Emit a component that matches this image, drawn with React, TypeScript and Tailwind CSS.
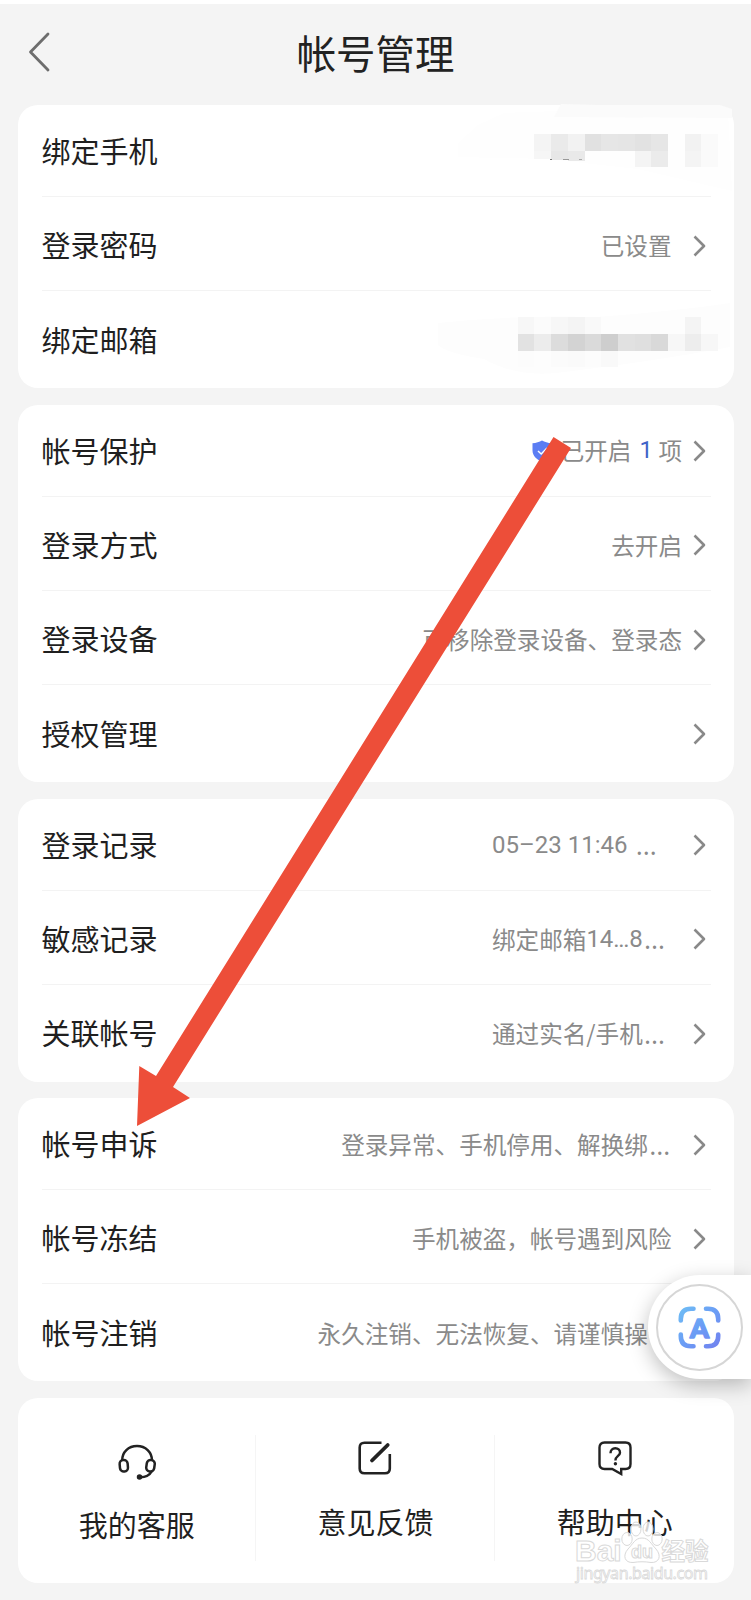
import React from 'react';
import clsx from 'clsx';

type RowData = {
  label: string;
  value?: React.ReactNode;
  // distance between the value and the chevron
  gap?: string;
  valueClass?: string;
  hideChevron?: boolean;
};

function Dots() {
  return (
    <span className="w-[23.6px] text-center font-['Open_Sans'] text-[27px] leading-[24px]">…</span>
  );
}

function Chevron() {
  return (
    <svg width="13" height="22" viewBox="0 0 13 22" fill="none" className="shrink-0">
      <path d="M1.5 1.5L11 11L1.5 20.5" stroke="#898989" strokeWidth="2.6" strokeLinejoin="round" />
    </svg>
  );
}

function Shield() {
  return (
    <svg width="20" height="22" viewBox="0 0 20 22" fill="none">
      <path
        d="M10 0.5C12.5 2 16 3 19.5 3.2V10.5C19.5 16 15 20 10 21.5C5 20 0.5 16 0.5 10.5V3.2C4 3 7.5 2 10 0.5Z"
        fill="#5b7df3"
      />
      <path d="M6 11L9.2 14L15 8" stroke="#fff" strokeWidth="1.5" />
    </svg>
  );
}

const PHONE_CELLS = [
  ['bg-[#f4f4f4]', 'bg-[#eaeaea]', 'bg-[#f2f2f2]', 'bg-[#e1e1e1]', 'bg-[#e6e6e6]', 'bg-[#e5e5e5]', 'bg-[#e2e2e2]', 'bg-[#e6e6e6]', '', 'bg-[#f2f2f2]', 'bg-[#fafafa]'],
  ['bg-[#f6f6f6] h-[8px]', 'bg-[#e7e7e7] h-[9px]', 'bg-[#e9e9e9] h-[10px]', '', '', '', 'bg-[#f4f4f4]', 'bg-[#ebebeb]', '', 'bg-[#f4f4f4]', 'bg-[#fafafa]'],
];

const MAIL_CELLS = [
  ['bg-[#f7f7f7]', 'bg-[#fbfbfb]', 'bg-[#f7f7f7]', 'bg-[#f4f4f4]', 'bg-[#f9f9f9]', '', '', '', '', '', 'bg-[#f4f4f4]', ''],
  ['bg-[#e2e2e2]', 'bg-[#ececec]', 'bg-[#dcdcdc]', 'bg-[#d3d3d3]', 'bg-[#dadada]', 'bg-[#cecece]', 'bg-[#e1e1e1]', 'bg-[#dfdfdf]', 'bg-[#d9d9d9]', 'bg-[#f7f7f7]', 'bg-[#ededed]', 'bg-[#f7f7f7]'],
  ['bg-[#fcfcfc]', '', 'bg-[#fbfbfb]', 'bg-[#fafafa]', 'bg-[#fcfcfc]', 'bg-[#f9f9f9]', '', '', '', '', '', ''],
];

function Mosaic({ cells }: { cells: string[][] }) {
  return (
    <div className="relative">
      {cells.map((line, y) => (
        <div key={y} className="flex h-[16.7px]">
          {line.map((cell, x) => (
            <div key={x} className={clsx('w-[16.7px]', !cell.includes(' h-') && 'h-full', cell)} />
          ))}
        </div>
      ))}
    </div>
  );
}

function PhoneMask() {
  return (
    <div className="relative -mr-[7px] -mt-[2px]">
      <svg
        className="absolute -left-[76px] -top-[31px]"
        width="276"
        height="90"
        viewBox="0 0 276 90"
        fill="none"
      >
        <path d="M0 40L20 22L46 10L100 8H270L274 88L180 66L90 56L0 54Z" fill="#fefefe" />
        <path d="M96 14L103 1L140 2H262L274 6V15Z" fill="#fbfbfb" />
      </svg>
      <Mosaic cells={PHONE_CELLS} />
      <div className="absolute left-[16px] top-[25px] flex w-[32px] justify-between">
        <i className="h-[1.5px] w-[2px] bg-[#777]" />
        <i className="h-px w-[6px] bg-[#999]" />
        <i className="h-px w-[3px] bg-[#aaa]" />
      </div>
    </div>
  );
}

function MailMask() {
  return (
    <div className="relative -mr-[7px] mt-[4px]">
      <svg
        className="absolute -left-[82px] -top-[14px]"
        width="298"
        height="75"
        viewBox="0 0 298 75"
        fill="none"
      >
        <path d="M2 20Q80 12 160 14Q240 8 294 0V44Q220 58 120 70Q80 74 48 56Q10 50 2 42Z" fill="#fdfdfd" />
      </svg>
      <Mosaic cells={MAIL_CELLS} />
    </div>
  );
}

const GROUPS: RowData[][] = [
  [
    { label: '绑定手机', value: <PhoneMask />, hideChevron: true },
    { label: '登录密码', value: '已设置', gap: 'gap-[21.5px]' },
    { label: '绑定邮箱', value: <MailMask />, hideChevron: true },
  ],
  [
    {
      label: '帐号保护',
      value: (
        <>
          <Shield />
          <span className="ml-[9px]">已开启</span>
          <span className="mx-[8px] w-[11px] text-center font-['Roboto'] text-[#3f63c8]">1</span>
          <span>项</span>
        </>
      ),
      gap: 'gap-[11px]',
    },
    { label: '登录方式', value: '去开启', gap: 'gap-[11px]' },
    { label: '登录设备', value: '可移除登录设备、登录态', gap: 'gap-[11px]' },
    { label: '授权管理' },
  ],
  [
    {
      label: '登录记录',
      value: (
        <>
          <span className="mr-[7px] font-['Roboto'] text-[24px]">05–23 11:46</span>
          <Dots />
        </>
      ),
      valueClass: 'w-[201px]',
    },
    {
      label: '敏感记录',
      value: (
        <>
          绑定邮箱<span className="font-['Roboto'] text-[24px]">14</span>
          <span className="font-['Roboto'] text-[24px] tracking-[-1.4px]">...</span>
          <span className="ml-[1px] font-['Roboto'] text-[24px]">8</span>
          <Dots />
        </>
      ),
      valueClass: 'w-[201px]',
    },
    {
      label: '关联帐号',
      value: (
        <>
          通过实名/手机
          <Dots />
        </>
      ),
      valueClass: 'w-[201px]',
    },
  ],
  [
    {
      label: '帐号申诉',
      value: (
        <>
          登录异常、手机停用、解换绑
          <Dots />
        </>
      ),
      gap: 'gap-[21.5px]',
    },
    { label: '帐号冻结', value: '手机被盗，帐号遇到风险', gap: 'gap-[21.5px]' },
    { label: '帐号注销', value: '永久注销、无法恢复、请谨慎操作', gap: 'gap-[21.5px]' },
  ],
];

function Row({ row, last }: { row: RowData; last: boolean }) {
  return (
    <div
      className={clsx(
        'mb-[2.4px] flex h-[92px] items-center justify-between border-b pt-[2px]',
        last ? 'border-transparent' : 'border-[#f3f3f3]'
      )}
    >
      <span className="pb-[2px] text-[29px] leading-none text-[#1f1f1f]">{row.label}</span>
      <div className={clsx('flex items-center', row.hideChevron ? 'pr-0' : 'pr-[5px]', row.gap)}>
        {row.value && (
          <div className={clsx('flex items-center whitespace-nowrap text-[23.6px] leading-none text-[#8a8a8a]', row.valueClass)}>
            {row.value}
          </div>
        )}
        {!row.hideChevron && <Chevron />}
      </div>
    </div>
  );
}

function HeadsetIcon() {
  return (
    <svg width="38" height="36" viewBox="0 0 38 36" fill="none" stroke="#222" strokeWidth="2.5">
      <path d="M4.2 16.5C4 8 10.5 2 19 2C27.5 2 34 8 34 16.5" />
      <rect x="1.8" y="16" width="8" height="11.500" rx="3.800" transform="rotate(-5 5.8 21.7)" />
      <rect x="28.5" y="16" width="8" height="11.500" rx="3.800" transform="rotate(8 32.5 21.7)" />
      <path d="M34 27C31.5 31.5 27.5 33.5 21.5 33.3" />
      <circle cx="21.5" cy="33" r="1.500" fill="#222" />
    </svg>
  );
}

function FeedbackIcon() {
  return (
    <svg width="34" height="34" viewBox="0 0 34 34" fill="none" stroke="#222" strokeWidth="2.6">
      <path d="M23.500 1.700H6.500Q1.700 1.700 1.700 6.500V27.500Q1.700 32.300 6.500 32.300H27Q31.800 32.300 31.800 27.500V13" />
      <path d="M14 19.500L29.700 4" strokeWidth="3.8" strokeLinecap="round" />
    </svg>
  );
}

function HelpIcon() {
  return (
    <svg width="34" height="35" viewBox="0 0 34 35" fill="none" stroke="#222" strokeWidth="2.4">
      <path d="M6.500 1.500H27.500Q32.500 1.500 32.500 6.500V23Q32.500 28 27.500 28H23.200V33L14.200 28H6.500Q1.500 28 1.500 23V6.500Q1.500 1.500 6.500 1.500Z" />
      <path d="M12.500 12.200C12.500 9 14.500 7.300 17.300 7.300C20 7.300 22 9 22 11.700C22 15 17.400 15 17.400 19.500" />
      <circle cx="17.4" cy="22.8" r="1.7" fill="#222" stroke="none" />
    </svg>
  );
}

const ACTIONS = [
  { label: '我的客服', icon: <HeadsetIcon />, offset: 'pt-[46.5px]' },
  { label: '意见反馈', icon: <FeedbackIcon />, offset: 'pt-[43.5px]' },
  { label: '帮助中心', icon: <HelpIcon />, offset: 'pt-[43.5px]' },
];

function FloatingButton() {
  return (
    <div className="absolute right-0 top-[1275px] flex h-[104px] w-[103px] items-center rounded-l-full bg-white pl-[8px] shadow-[0_6px_20px_rgba(0,0,0,0.25)]">
      <div className="flex size-[87px] items-center justify-center rounded-full border-2 border-[#d6d6d6]">
        <svg width="43" height="43" viewBox="0 0 43 43" fill="none">
          <defs>
            <linearGradient id="scan" x1="0" y1="0" x2="43" y2="43" gradientUnits="userSpaceOnUse">
              <stop stopColor="#6fc0f5" />
              <stop offset="0.5" stopColor="#6b9df5" />
              <stop offset="1" stopColor="#727fee" />
            </linearGradient>
          </defs>
          <g stroke="url(#scan)" strokeWidth="4.6" strokeLinecap="round">
            <path d="M2.800 14.500V13Q2.800 2.800 13 2.800H15.500" />
            <path d="M28 2.800H30Q40.200 2.800 40.200 13V14.500" />
            <path d="M40.200 28.500V30Q40.200 40.200 30 40.200H28" />
            <path d="M15.500 40.200H13Q2.800 40.200 2.800 30V28.500" />
          </g>
          <text
            x="21.5"
            y="31.5"
            textAnchor="middle"
            fontSize="27"
            fontWeight="900"
            fontFamily="Lato"
            fill="url(#scan)"
            stroke="url(#scan)"
            strokeWidth="1.6"
            strokeLinejoin="round"
          >
            A
          </text>
        </svg>
      </div>
    </div>
  );
}

function Arrow() {
  return (
    <svg className="absolute left-0 top-0" width="751" height="1600" viewBox="0 0 751 1600">
      <polygon points="553.5,437 571,448 173,1087 190,1098 137,1126 139.3,1066 156,1076" fill="#ed4e39" />
    </svg>
  );
}

function Watermark() {
  return (
    <svg className="absolute left-[570px] top-[1515px]" width="150" height="72" viewBox="0 0 150 72">
      <g fill="#fff" fillOpacity="0.8" stroke="#d9d9d9" strokeWidth="1">
        <text x="5" y="46" fontSize="30" fontWeight="700" fontFamily="Liberation Sans">
          Bai
        </text>
        <ellipse cx="57" cy="24" rx="5.2" ry="6.5" />
        <ellipse cx="66" cy="14" rx="5" ry="7" />
        <ellipse cx="78" cy="14" rx="5" ry="7" />
        <ellipse cx="87" cy="24" rx="5.2" ry="6.500" />
        <path d="M72 23C79 23 81 29 86 34C92 41 89 48 81 47.500C75 46.500 69 46.500 63 47.500C55 48 52 41 58 34C63 29 65 23 72 23Z" />
        <text x="72" y="43" fontSize="18" fontWeight="700" fontFamily="Liberation Sans" textAnchor="middle">
          du
        </text>
        <text x="91.5" y="44.5" fontSize="23.500" fontWeight="700" fontFamily="Noto Sans CJK SC">
          经验
        </text>
        <text x="6" y="64" fontSize="16" strokeWidth="0.8" fontFamily="Noto Sans" textLength="132">
          jingyan.baidu.com
        </text>
      </g>
    </svg>
  );
}

export default function App() {
  return (
    <div className="relative h-[1600px] w-[751px] overflow-hidden border-t-4 border-white bg-[#f4f4f4] font-['Noto_Sans_CJK_SC',sans-serif]">
      {/* Header */}
      <header className="relative flex h-[101px] items-center justify-center pb-[5px]">
        <svg className="absolute left-[28px] top-[28px]" width="22" height="40" viewBox="0 0 22 40" fill="none">
          <path d="M20 2L2.5 20L20 38" stroke="#6d6d6d" strokeWidth="2.8" strokeLinecap="round" strokeLinejoin="round" />
        </svg>
        <h1 className="text-[39.4px] leading-none text-[#222]">帐号管理</h1>
      </header>

      {/* Setting groups */}
      <main className="flex flex-col gap-[16.4px] pl-[17.5px] pr-[17.5px]">
        {GROUPS.map((rows, i) => (
          <section key={i} className="rounded-[20px] bg-white pl-[24px] pr-[22.5px]">
            {rows.map((row, j) => (
              <Row key={row.label} row={row} last={j === rows.length - 1} />
            ))}
          </section>
        ))}

        {/* Bottom actions */}
        <section className="grid h-[185px] grid-cols-3 rounded-[20px] bg-white">
          {ACTIONS.map((action, i) => (
            <div key={action.label} className="flex items-center">
              <div className={clsx('flex h-full flex-1 flex-col items-center pl-[1px]', action.offset)}>
                <div className="h-[65.5px]">{action.icon}</div>
                <span className="text-[29px] leading-none text-[#1f1f1f]">{action.label}</span>
              </div>
              {i < ACTIONS.length - 1 && <div className="mt-[16px] h-[126px] w-px bg-[#f5f5f5]" />}
            </div>
          ))}
        </section>
      </main>

      <div className="absolute inset-x-0 -top-1 h-[1600px]">
        <Arrow />
        <FloatingButton />
        <Watermark />
      </div>
    </div>
  );
}
